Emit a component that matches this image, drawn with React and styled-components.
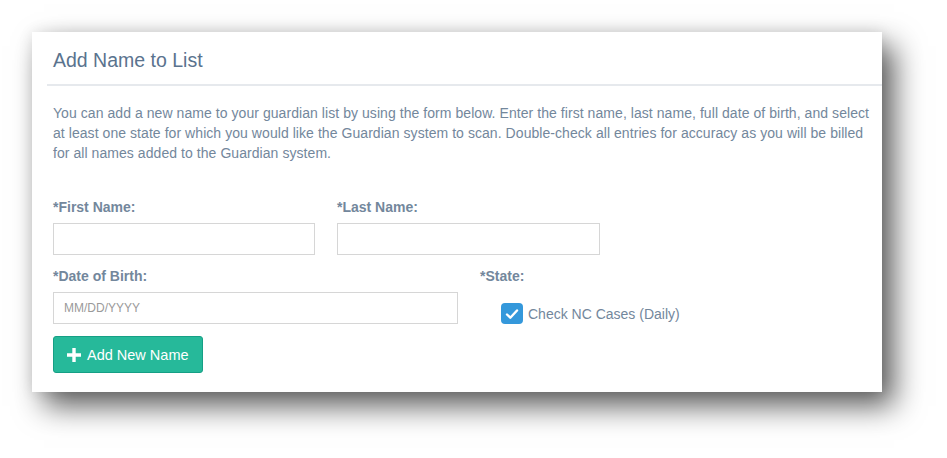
import React from 'react';
import styled, { createGlobalStyle } from 'styled-components';

const GlobalStyle = createGlobalStyle`
  html, body {
    margin: 0;
    padding: 0;
    background: #ffffff;
  }
  body {
    font-family: "Liberation Sans", Arial, sans-serif;
    color: #73879c;
  }
`;

const Page = styled.div`
  width: 947px;
  height: 458px;
  padding: 32px;
  box-sizing: border-box;
  overflow: hidden;
`;

const Panel = styled.section`
  width: 850px;
  height: 360px;
  box-sizing: border-box;
  background: #ffffff;
  padding: 0 0 0 15px;
  overflow: hidden;
  box-shadow: 12px 14px 28px rgba(0, 0, 0, 0.64), 0 0 14px rgba(0, 0, 0, 0.09);
`;

const PanelTitle = styled.div`
  padding: 16px 0 12px 6px;
  border-bottom: 2px solid #e6e9ed;
`;

const Title = styled.h2`
  margin: 0;
  font-size: 19.5px;
  line-height: 24px;
  font-weight: normal;
  color: #5a738e;
`;

const Content = styled.div`
  padding: 0 10px 0 6px;
`;

const Intro = styled.p`
  margin: 17px 0 36px;
  font-size: 14px;
  line-height: 20px;
  letter-spacing: 0.06px;
  color: #73879c;
`;

const Row = styled.div`
  display: grid;
  grid-template-columns: ${p => p.$cols};
  column-gap: 22px;
  margin-bottom: ${p => p.$gap || 0}px;
`;

const Field = styled.div`
  display: flex;
  flex-direction: column;
`;

const Label = styled.label`
  display: block;
  font-size: 14px;
  line-height: 16px;
  font-weight: bold;
  color: #73879c;
  margin-bottom: 8px;
`;

const Input = styled.input`
  box-sizing: border-box;
  height: 32px;
  width: 100%;
  border: 1px solid #d6d6d6;
  border-radius: 0;
  padding: 0 10px;
  font-family: "Liberation Sans", Arial, sans-serif;
  font-size: 12px;
  color: #555;
  outline: none;
  &::placeholder {
    color: #9a9a9a;
  }
`;

const CheckRow = styled.label`
  display: flex;
  align-items: center;
  gap: 5px;
  margin-top: 11px;
  padding-left: 21px;
  font-size: 14px;
  color: #73879c;
`;

const CheckBox = styled.span`
  width: 22px;
  height: 21px;
  border-radius: 4px;
  background: #3498db;
  display: flex;
  align-items: center;
  justify-content: center;
`;

const Button = styled.button`
  display: inline-flex;
  align-items: center;
  gap: 6px;
  height: 37px;
  width: 150px;
  box-sizing: border-box;
  padding: 0 10px 0 13px;
  background: #26b99a;
  border: 1px solid #169f85;
  border-radius: 3px;
  color: #ffffff;
  font-family: "Liberation Sans", Arial, sans-serif;
  font-size: 14.5px;
`;

const Plus = () => (
  <svg width="14" height="14" viewBox="0 0 14 14">
    <path d="M5.3 0h3.4v5.3H14v3.4H8.7V14H5.3V8.7H0V5.3h5.3z" fill="#fff" />
  </svg>
);

const Check = () => (
  <svg width="14" height="12" viewBox="0 0 14 12">
    <path d="M2 6.5l3.3 3.2L12 2.5" fill="none" stroke="#fff" strokeWidth="2.4" strokeLinecap="round" strokeLinejoin="round" />
  </svg>
);

export default function App() {
  return (
    <Page>
      <GlobalStyle />
      <Panel>
        <PanelTitle>
          <Title>Add Name to List</Title>
        </PanelTitle>
        <Content>
          <Intro>
            You can add a new name to your guardian list by using the form below. Enter the first name, last name, full date of birth, and select at least one state for which you would like the Guardian system to scan. Double-check all entries for accuracy as you will be billed for all names added to the Guardian system.
          </Intro>
          <Row $cols="262px 263px" $gap={13}>
            <Field>
              <Label>*First Name:</Label>
              <Input type="text" />
            </Field>
            <Field>
              <Label>*Last Name:</Label>
              <Input type="text" />
            </Field>
          </Row>
          <Row $cols="405px 1fr" $gap={12}>
            <Field>
              <Label>*Date of Birth:</Label>
              <Input type="text" placeholder="MM/DD/YYYY" />
            </Field>
            <Field>
              <Label>*State:</Label>
              <CheckRow>
                <CheckBox><Check /></CheckBox>
                Check NC Cases (Daily)
              </CheckRow>
            </Field>
          </Row>
          <Button type="button">
            <Plus />
            Add New Name
          </Button>
        </Content>
      </Panel>
    </Page>
  );
}
